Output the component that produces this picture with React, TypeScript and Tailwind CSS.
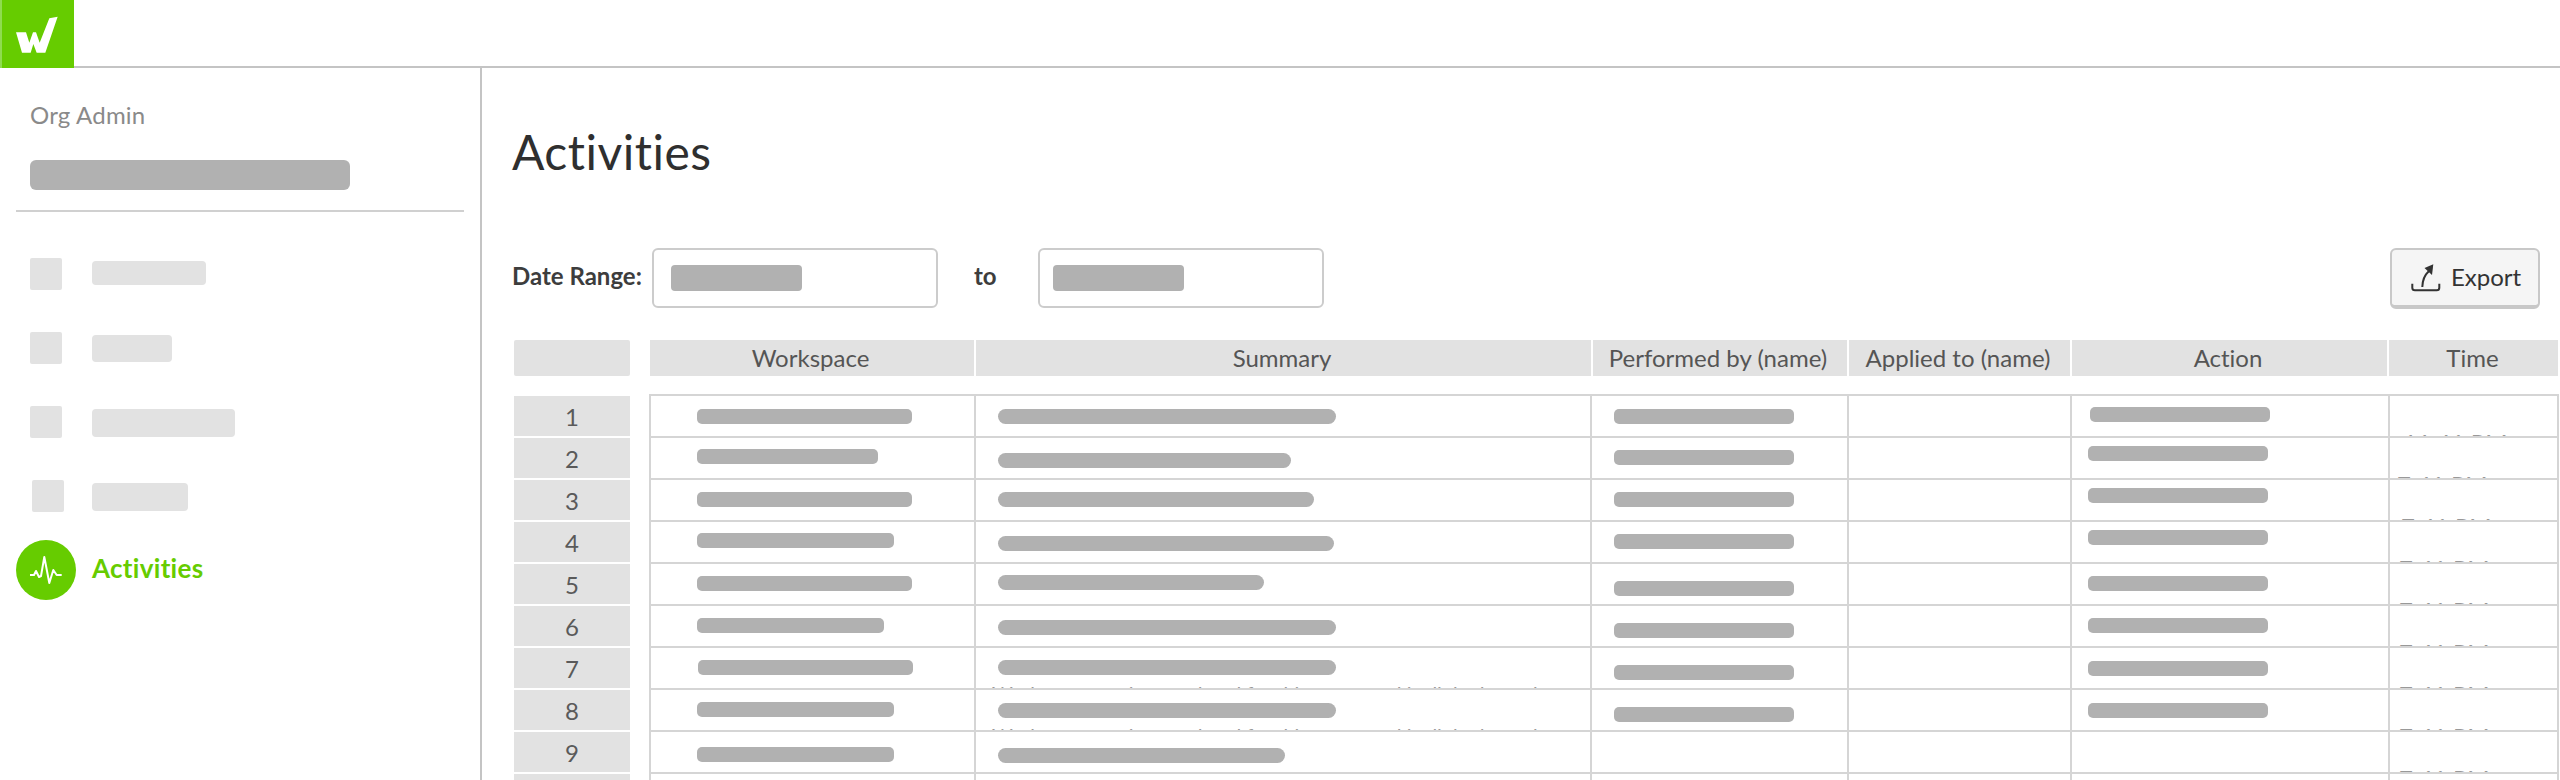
const GREEN = 'text-[#66cc00]'

const navItems = [
  { squareLeft: 0, barWidth: 114, barHeight: 24 },
  { squareLeft: 0, barWidth: 80, barHeight: 27 },
  { squareLeft: 0, barWidth: 143, barHeight: 28 },
  { squareLeft: 2, barWidth: 96, barHeight: 28 },
]

// left / width of each redacted value, top is measured from the row's top edge
type Bar = { left: number; width: number; top: number }

const rows: {
  workspace: Bar
  summary: Bar
  performedBy?: Bar
  action?: Bar
  time: string
  timeLeft: number
  noteTop?: number
}[] = [
  { workspace: { left: 46, width: 215, top: 13 }, summary: { left: 22, width: 338, top: 13 }, performedBy: { left: 22, width: 180, top: 13 }, action: { left: 18, width: 180, top: 11 }, time: '11:41 PM', timeLeft: 13 },
  { workspace: { left: 46, width: 181, top: 11 }, summary: { left: 22, width: 293, top: 15 }, performedBy: { left: 22, width: 180, top: 12 }, action: { left: 16, width: 180, top: 8 }, time: '7:41 PM', timeLeft: 7 },
  { workspace: { left: 46, width: 215, top: 12 }, summary: { left: 22, width: 316, top: 12 }, performedBy: { left: 22, width: 180, top: 12 }, action: { left: 16, width: 180, top: 8 }, time: '7:41 PM', timeLeft: 11 },
  { workspace: { left: 46, width: 197, top: 11 }, summary: { left: 22, width: 336, top: 14 }, performedBy: { left: 22, width: 180, top: 12 }, action: { left: 16, width: 180, top: 8 }, time: '7:41 PM', timeLeft: 9 },
  { workspace: { left: 46, width: 215, top: 12 }, summary: { left: 22, width: 266, top: 11 }, performedBy: { left: 22, width: 180, top: 17 }, action: { left: 16, width: 180, top: 12 }, time: '7:41 PM', timeLeft: 9 },
  { workspace: { left: 46, width: 187, top: 12 }, summary: { left: 22, width: 338, top: 14 }, performedBy: { left: 22, width: 180, top: 17 }, action: { left: 16, width: 180, top: 12 }, time: '7:41 PM', timeLeft: 9 },
  { workspace: { left: 47, width: 215, top: 12 }, summary: { left: 22, width: 338, top: 12 }, performedBy: { left: 22, width: 180, top: 17 }, action: { left: 16, width: 180, top: 13 }, time: '7:41 PM', timeLeft: 9, noteTop: 6 },
  { workspace: { left: 46, width: 197, top: 12 }, summary: { left: 22, width: 338, top: 13 }, performedBy: { left: 22, width: 180, top: 17 }, action: { left: 16, width: 180, top: 13 }, time: '7:41 PM', timeLeft: 9, noteTop: 5 },
  { workspace: { left: 46, width: 197, top: 15 }, summary: { left: 22, width: 287, top: 16 }, time: '7:41 PM', timeLeft: 9 },
  { workspace: { left: 46, width: 197, top: 15 }, summary: { left: 22, width: 287, top: 16 }, time: '7:41 PM', timeLeft: 9 },
]

const headers = [
  { label: 'Workspace', width: 'w-[324px]', inner: 'pr-[3px]' },
  { label: 'Summary', width: 'w-[615px]', inner: 'pr-[3px]' },
  { label: 'Performed by (name)', width: 'w-[254px]', inner: 'pr-[4px]' },
  { label: 'Applied to (name)', width: 'w-[221px]', inner: 'pr-[3px]' },
  { label: 'Action', width: 'w-[315px]', inner: 'pr-[3px]' },
  { label: 'Time', width: 'w-[169px]', inner: 'pr-[2px]' },
]

function Logo() {
  return (
    <div className="h-[68px] w-[74px] shrink-0 border-l-2 border-[#8fdc4f] bg-[#66cc00]">
      <svg viewBox="0 0 216 204" className="h-[68px] w-[72px]">
        <polygon
          fill="#ffffff"
          points="42,97 72,97 82,128 93,97 102,97 113,128 142,55 167,50 130,158 104,158 94,132 86,158 60,158"
        />
      </svg>
    </div>
  )
}

function PulseIcon() {
  return (
    <svg viewBox="0 0 60 60" className="h-[60px] w-[60px]">
      <polyline
        fill="none"
        stroke="#ffffff"
        strokeWidth="2"
        strokeLinejoin="round"
        points="14,35 18,35 20,31 23,37 25,36 28.3,17 33.3,43 37.3,30 40.7,35 45.7,35"
      />
    </svg>
  )
}

function ExportIcon() {
  return (
    <svg viewBox="0 0 30 30" className="h-[30px] w-[30px] shrink-0">
      <path d="M1.3 21.7V25.7Q1.3 28.3 4 28.3H25.7Q28.3 28.3 28.3 25.7V21.7" fill="none" stroke="#333333" strokeWidth="2" />
      <path d="M11.3 25Q11.5 15 18 9" fill="none" stroke="#333333" strokeWidth="2" />
      <polygon points="22.3,2.3 13.5,6 21,13" fill="#333333" />
    </svg>
  )
}

function Sidebar() {
  return (
    <aside className="h-full w-[482px] shrink-0 border-r-2 border-[#c4c4c4]">
      <p className="ml-[30px] mt-[32px] text-[24px] leading-[30px] tracking-[0.2px] text-[#8a8a8a]">Org Admin</p>
      <div className="ml-[30px] mt-[30px] h-[30px] w-[320px] rounded-[6px] bg-[#b1b1b1]" />
      <div className="ml-4 mt-5 h-[2px] w-[448px] bg-[#d0d0d0]" />
      <nav className="mt-[46px] flex flex-col">
        {navItems.map((item, i) => (
          <div key={i} className="flex h-[74px] items-start">
            <div className="flex w-[92px] justify-start pl-[30px]">
              <div className="h-[32px] w-[32px] rounded-[2px] bg-[#e2e2e2]" style={{ marginLeft: item.squareLeft }} />
            </div>
            <div
              className="mt-[3px] rounded-[4px] bg-[#e2e2e2]"
              style={{ width: item.barWidth, height: item.barHeight }}
            />
          </div>
        ))}
        <div className="mt-[-14px] flex items-center pl-4">
          <div className="h-[60px] w-[60px] rounded-full bg-[#66cc00]">
            <PulseIcon />
          </div>
          <span className={`mb-[4px] ml-4 text-[26px] font-bold leading-[32px] tracking-[0.3px] ${GREEN}`}>Activities</span>
        </div>
      </nav>
    </aside>
  )
}

function DateInput({ inset }: { inset: string }) {
  return (
    <div className={`flex h-[60px] w-[286px] items-center rounded-[6px] border-2 border-[#cccccc] ${inset}`}>
      <div className="h-[26px] w-[131px] rounded-[4px] bg-[#b1b1b1]" />
    </div>
  )
}

function Cell({ bar, width, radius, last, children }: { bar?: Bar; width: string; radius?: string; last?: boolean; children?: React.ReactNode }) {
  return (
    <div className={`h-full shrink-0 overflow-hidden border-l-2 border-[#d5d5d5] ${width} ${last ? 'border-r-2' : ''}`}>
      {bar && (
        <div
          className={`h-[15px] bg-[#b1b1b1] ${radius ?? 'rounded-[5px]'}`}
          style={{ marginLeft: bar.left, width: bar.width, marginTop: bar.top }}
        />
      )}
      {children}
    </div>
  )
}

function ActivityRow({ row }: { row: (typeof rows)[number] }) {
  return (
    <div className="flex h-[42px] border-b-2 border-[#d5d5d5]">
      <Cell width="w-[325px]" bar={row.workspace} />
      <Cell width="w-[616px]" bar={row.summary} radius="rounded-full">
        {row.noteTop && (
          <p
            className="ml-4 whitespace-nowrap text-[20px] leading-[24px] text-[#999999]"
            style={{ marginTop: row.noteTop }}
          >
            Workspace settings updated for this group and its linked members
          </p>
        )}
      </Cell>
      <Cell width="w-[257px]" bar={row.performedBy} />
      <Cell width="w-[223px]" />
      <Cell width="w-[318px]" bar={row.action} />
      <Cell width="w-[171px]" last>
        <p
          className="mt-[35px] whitespace-nowrap text-[24px] leading-[24px] text-[#999999]"
          style={{ marginLeft: row.timeLeft }}
        >
          {row.time}
        </p>
      </Cell>
    </div>
  )
}

export default function App() {
  return (
    <div className="flex h-screen flex-col overflow-hidden bg-white font-['Lato',sans-serif] [font-variant-ligatures:none]">
      <header className="flex h-[68px] shrink-0 border-b-2 border-[#c4c4c4]">
        <Logo />
      </header>

      <div className="flex min-h-0 flex-1">
        <Sidebar />

        <main className="min-w-0 flex-1 pl-[30px] pt-[55px]">
          <h1 className="text-[48px] font-normal leading-[58px] tracking-[0.5px] text-[#2f2f2f]">Activities</h1>

          <div className="mt-[67px] flex h-[61px] items-start pr-[20px]">
            <span className="mt-[12px] w-[140px] text-[24px] font-bold leading-[32px] text-[#3d3d3d]">Date Range:</span>
            <DateInput inset="pl-[17px]" />
            <span className="mt-[12px] w-[100px] pl-[36px] text-[24px] font-bold leading-[32px] text-[#3d3d3d]">to</span>
            <DateInput inset="pl-[13px]" />
            <button className="ml-auto flex h-[61px] w-[150px] items-center gap-[10px] rounded-[6px] border-2 border-b-4 border-[#c8c8c8] bg-[#f5f5f5] pb-[2px] pl-[19px] text-[24px] text-[#333333]">
              <ExportIcon />
              Export
            </button>
          </div>

          <div className="ml-[2px] mt-[31px] flex">
            <div className="h-[36px] w-[116px] rounded-[2px] bg-[#e2e2e2]" />
            <div className="ml-[20px] flex gap-[2px]">
              {headers.map((h) => (
                <div key={h.label} className={`h-[36px] text-center text-[24px] leading-[36px] text-[#555555] ${h.width}`}>
                  <div className={`h-full whitespace-nowrap bg-[#e2e2e2] ${h.inner}`}>{h.label}</div>
                </div>
              ))}
            </div>
          </div>

          <div className="ml-[2px] mt-[18px] flex">
            <div className="flex w-[116px] flex-col gap-[2px] pt-[2px]">
              {rows.map((_, i) => (
                <div key={i} className="h-[40px] shrink-0 bg-[#e2e2e2] pt-[1px] text-center text-[24px] leading-[40px] text-[#5a5a5a]">
                  {i + 1}
                </div>
              ))}
            </div>
            <div className="ml-[19px] border-t-2 border-[#d5d5d5]">
              {rows.map((row, i) => (
                <ActivityRow key={i} row={row} />
              ))}
            </div>
          </div>
        </main>
      </div>
    </div>
  )
}
